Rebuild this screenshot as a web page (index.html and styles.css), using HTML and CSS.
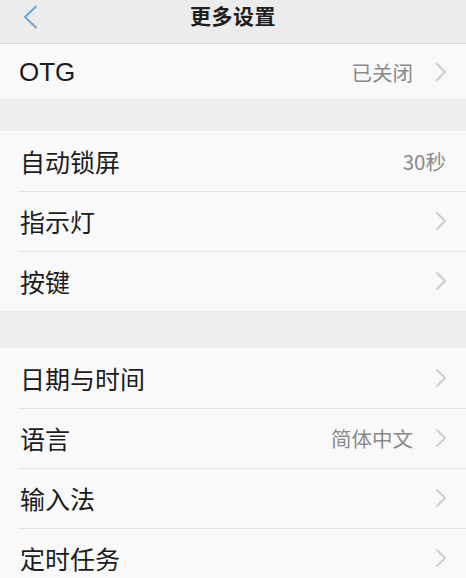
FILE: index.html
```html
<!DOCTYPE html>
<html lang="zh-CN">
<head>
<meta charset="utf-8">
<link rel="stylesheet" href="styles.css">
</head>
<body>
<div class="page">
  <header class="topbar">
    <svg class="back" width="17" height="24" viewBox="0 0 17 24"><path d="M14 1.5 L3 12 L14 22.5" fill="none" stroke="#6aa6d6" stroke-width="2" stroke-linecap="round" stroke-linejoin="round"/></svg>
    <div class="title">更多设置</div>
  </header>

  <section class="group first">
    <div class="row otg"><span class="label latin">OTG</span><span class="value">已关闭</span><svg class="chev" width="12" height="20" viewBox="0 0 12 20"><path d="M2 2 L10 10 L2 18" fill="none" stroke="#cdcdcd" stroke-width="2" stroke-linecap="round" stroke-linejoin="round"/></svg></div>
  </section>

  <section class="group g2">
    <div class="row"><span class="label">自动锁屏</span><span class="value end">30秒</span></div>
    <div class="row"><span class="label">指示灯</span><svg class="chev" width="12" height="20" viewBox="0 0 12 20"><path d="M2 2 L10 10 L2 18" fill="none" stroke="#cdcdcd" stroke-width="2" stroke-linecap="round" stroke-linejoin="round"/></svg></div>
    <div class="row"><span class="label">按键</span><svg class="chev" width="12" height="20" viewBox="0 0 12 20"><path d="M2 2 L10 10 L2 18" fill="none" stroke="#cdcdcd" stroke-width="2" stroke-linecap="round" stroke-linejoin="round"/></svg></div>
  </section>

  <section class="group g3">
    <div class="row"><span class="label">日期与时间</span><svg class="chev" width="12" height="20" viewBox="0 0 12 20"><path d="M2 2 L10 10 L2 18" fill="none" stroke="#cdcdcd" stroke-width="2" stroke-linecap="round" stroke-linejoin="round"/></svg></div>
    <div class="row"><span class="label">语言</span><span class="value">简体中文</span><svg class="chev" width="12" height="20" viewBox="0 0 12 20"><path d="M2 2 L10 10 L2 18" fill="none" stroke="#cdcdcd" stroke-width="2" stroke-linecap="round" stroke-linejoin="round"/></svg></div>
    <div class="row"><span class="label">输入法</span><svg class="chev" width="12" height="20" viewBox="0 0 12 20"><path d="M2 2 L10 10 L2 18" fill="none" stroke="#cdcdcd" stroke-width="2" stroke-linecap="round" stroke-linejoin="round"/></svg></div>
    <div class="row"><span class="label">定时任务</span><svg class="chev" width="12" height="20" viewBox="0 0 12 20"><path d="M2 2 L10 10 L2 18" fill="none" stroke="#cdcdcd" stroke-width="2" stroke-linecap="round" stroke-linejoin="round"/></svg></div>
  </section>
</div>
</body>
</html>
```

FILE: styles.css
```css
html, body {
  margin: 0;
  padding: 0;
  background: #efefef;
  font-family: "Noto Sans CJK SC", "Noto Sans", sans-serif;
  overflow: hidden;
}

.page {
  width: 466px;
  height: 578px;
  display: flex;
  flex-direction: column;
  background: #efefef;
}

.topbar {
  position: relative;
  height: 44px;
  box-sizing: border-box;
  background: #ececec;
  border-bottom: 1px solid #d4d4d4;
  display: flex;
  justify-content: center;
  align-items: flex-start;
  flex-shrink: 0;
}

.back {
  position: absolute;
  left: 22px;
  top: 5px;
}

.title {
  font-size: 21px;
  font-weight: 700;
  color: #1e1e1e;
  line-height: 30px;
  letter-spacing: 0.5px;
}

.group {
  background: #f9f9f9;
  flex-shrink: 0;
}

.g2 {
  margin-top: 32px;
}

.g3 {
  margin-top: 37px;
}

.row {
  height: 60px;
  display: flex;
  align-items: center;
  padding: 0 19px 0 20px;
  position: relative;
}

.row + .row::before {
  content: "";
  position: absolute;
  left: 18px;
  right: 0;
  top: 0;
  height: 1px;
  background: #e3e3e3;
}

.row.otg {
  height: 55px;
}

.label {
  font-size: 25px;
  color: #1c1c1c;
  flex: 1;
  line-height: 30px;
}

.label.latin {
  font-family: "Liberation Sans", "Noto Sans", sans-serif;
  font-size: 26px;
  margin-left: -1px;
}

.value {
  font-size: 20.5px;
  color: #8a8a8a;
  margin-right: 22px;
}

.value.end {
  margin-right: 1px;
}

.chev {
  flex-shrink: 0;
}
```
